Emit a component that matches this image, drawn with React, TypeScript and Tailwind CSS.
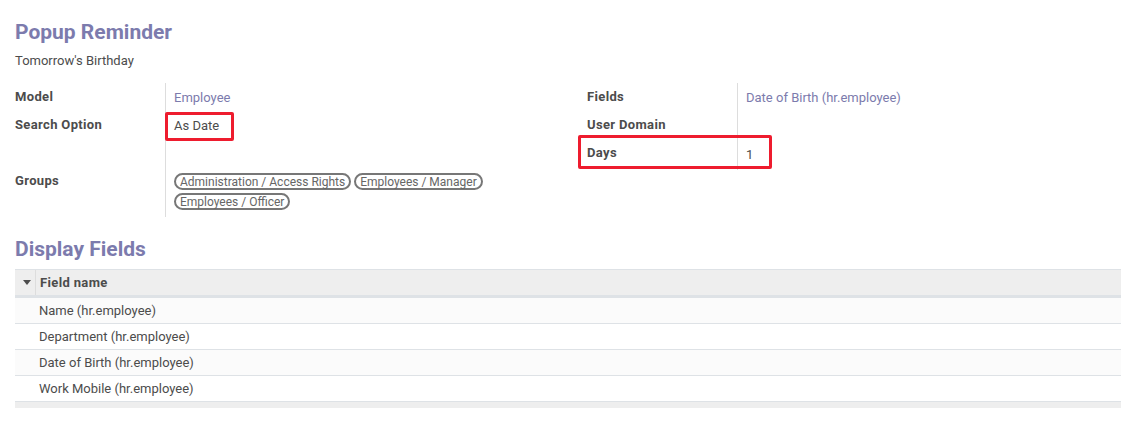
import React from "react"

const purple = "text-[#7c7bad]"

function Label({ children }: { children: React.ReactNode }) {
    return <div className="w-[150px] shrink-0 pt-[4px] font-bold tracking-[0.35px] text-[#4c4c4c]">{children}</div>
}

function Tag({ children }: { children: React.ReactNode }) {
    return (
        <span className="inline-flex h-[17px] items-center rounded-full border-2 border-[#777777] px-[4px] text-[12px] leading-none text-[#666666]">
            {children}
        </span>
    )
}

const displayFields = [
    "Name (hr.employee)",
    "Department (hr.employee)",
    "Date of Birth (hr.employee)",
    "Work Mobile (hr.employee)"
]

export default function App() {
    return (
        <div className="min-h-[434px] bg-white px-[15px] pt-[20px] text-[13px] text-[#4c4c4c]" style={{ fontFamily: "Roboto, 'Noto Sans', sans-serif" }}>
            <h1 className={`text-[21px] font-bold leading-[24px] ${purple}`}>Popup Reminder</h1>
            <div className="mt-[8px] leading-[18px]">Tomorrow's Birthday</div>

            <div className="mt-[13px] grid grid-cols-[572px_1fr]">
                {/* left group */}
                <div className="flex flex-col">
                    <div className="flex h-[28px]">
                        <Label>Model</Label>
                        <div className={`border-l border-[#dddddd] pl-[8px] pt-[5px] ${purple}`}>Employee</div>
                    </div>
                    <div className="flex h-[28px]">
                        <Label>Search Option</Label>
                        <div className="relative flex-1 border-l border-[#dddddd] pl-[8px] pt-[5px]">
                            As Date
                            <div className="absolute left-[-1px] top-[1px] h-[29px] w-[69px] rounded-[2px] border-[3px] border-[#ee1c2e]" />
                        </div>
                    </div>
                    <div className="flex h-[28px]">
                        <Label>{""}</Label>
                        <div className="border-l border-[#dddddd]" />
                    </div>
                    <div className="flex h-[50px]">
                        <Label>Groups</Label>
                        <div className="flex-1 border-l border-[#dddddd] pl-[8px] pt-[6px]">
                            <div className="flex flex-wrap gap-x-[3px] gap-y-[3px]">
                                <Tag>Administration / Access Rights</Tag>
                                <Tag>Employees / Manager</Tag>
                            </div>
                            <div className="mt-[3px] flex">
                                <Tag>Employees / Officer</Tag>
                            </div>
                        </div>
                    </div>
                </div>

                {/* right group */}
                <div className="flex flex-col">
                    <div className="flex h-[28px]">
                        <Label>Fields</Label>
                        <div className={`border-l border-[#dddddd] pl-[8px] pt-[5px] ${purple}`}>Date of Birth (hr.employee)</div>
                    </div>
                    <div className="flex h-[28px]">
                        <Label>User Domain</Label>
                        <div className="border-l border-[#dddddd]" />
                    </div>
                    <div className="relative flex h-[31px]">
                        <Label>Days</Label>
                        <div className="border-l border-[#dddddd] pl-[8px] pt-[6px]">1</div>
                        <div className="absolute left-[-9px] top-[-4px] h-[34px] w-[194px] rounded-[2px] border-[3px] border-[#ee1c2e]" />
                    </div>
                </div>
            </div>

            <h2 className={`mt-[20px] text-[21px] font-bold leading-[24px] ${purple}`}>Display Fields</h2>

            <div className="mt-[8px] w-[1106px]">
                <div className="flex h-[29px] items-center border-t border-b-[3px] border-[#dee2e6] bg-[#eeeeee] font-bold tracking-[0.35px]">
                    <div className="flex h-full w-[21px] items-center justify-end border-r border-[#dddddd] pr-[4px]">
                        <svg width="8" height="5" viewBox="0 0 8 5">
                            <path d="M0 0 L8 0 L4 5 Z" fill="#4c4c4c" />
                        </svg>
                    </div>
                    <div className="pl-[4px]">Field name</div>
                </div>
                {displayFields.map((f, i) => (
                    <div
                        key={f}
                        className={`flex h-[26px] items-center border-b border-[#dee2e6] pl-[24px] ${i % 2 === 0 ? "bg-[#fbfbfb]" : "bg-white"}`}
                    >
                        {f}
                    </div>
                ))}
                <div className="h-[6px] bg-[#eeeeee]" />
            </div>
        </div>
    )
}
